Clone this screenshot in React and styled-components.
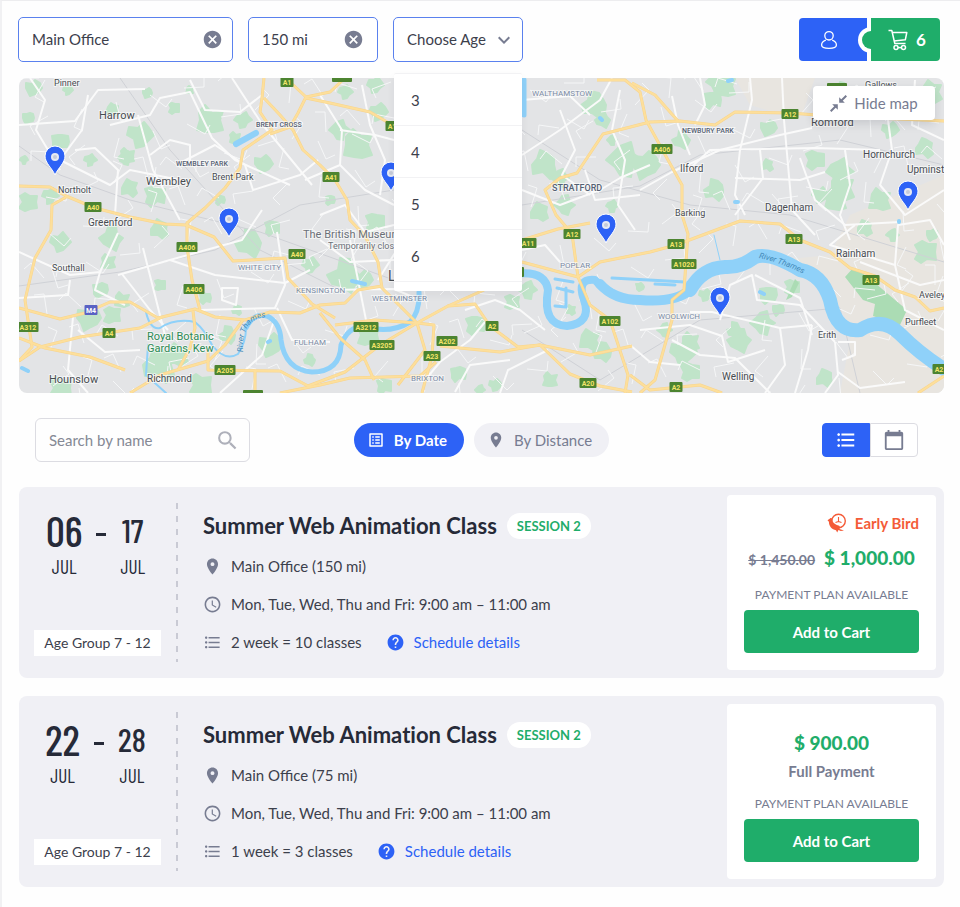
import React, { useState } from "react";
import styled, { createGlobalStyle } from "styled-components";
import {
  MdCalendarToday,
  MdCancel,
  MdFormatListBulleted,
  MdHelp,
  MdKeyboardArrowDown,
  MdLocationOn,
  MdOutlineListAlt,
  MdSchedule,
  MdSearch,
} from "react-icons/md";

const colors = {
  blue: "#2d62f6",
  green: "#1fad6a",
  orange: "#f45b38",
  dark: "#262a38",
  text: "#3c404c",
  grey: "#777c91",
  panel: "#f0f0f5",
  line: "#dcdce2",
};

const classes = [
  {
    id: 1,
    from: ["06", "JUL"],
    to: ["17", "JUL"],
    ages: "Age Group 7 - 12",
    title: "Summer Web Animation Class",
    session: "SESSION 2",
    place: "Main Office (150 mi)",
    time: "Mon, Tue, Wed, Thu and Fri: 9:00 am – 11:00 am",
    length: "2 week = 10 classes",
    oldPrice: "$ 1,450.00",
    price: "$ 1,000.00",
    earlyBird: true,
  },
  {
    id: 2,
    from: ["22", "JUL"],
    to: ["28", "JUL"],
    ages: "Age Group 7 - 12",
    title: "Summer Web Animation Class",
    session: "SESSION 2",
    place: "Main Office (75 mi)",
    time: "Mon, Tue, Wed, Thu and Fri: 9:00 am – 11:00 am",
    length: "1 week = 3 classes",
    price: "$ 900.00",
    earlyBird: false,
  },
];

const ages = ["3", "4", "5", "6"];

/* ---------- map data ---------- */

const parks = [
  [33, 88, 8], [28, 118, 6], [68, 90, 5], [113, 110, 7], [60, 142, 9], [140, 135, 13],
  [127, 156, 8], [147, 93, 5], [174, 108, 6], [210, 120, 15], [243, 120, 8], [235, 138, 6],
  [190, 90, 4], [130, 188, 9], [155, 196, 11], [126, 158, 7], [90, 160, 6], [263, 164, 9],
  [28, 202, 10], [50, 196, 8], [24, 160, 4], [160, 229, 10], [220, 200, 5], [272, 228, 8],
  [60, 242, 10], [112, 238, 12], [108, 262, 8], [250, 243, 14], [100, 290, 8], [88, 318, 12],
  [112, 315, 9], [122, 300, 8], [160, 285, 6], [160, 365, 18], [178, 355, 12], [60, 388, 12],
  [200, 385, 12], [228, 335, 9], [270, 345, 12], [237, 310, 5], [310, 360, 6], [205, 298, 6],
  [358, 145, 16], [340, 130, 10], [378, 112, 9], [375, 222, 10], [345, 92, 7], [375, 85, 8],
  [330, 200, 5], [345, 275, 17], [362, 280, 10], [310, 265, 8], [368, 335, 12], [384, 386, 8],
  [595, 105, 14], [603, 120, 8], [612, 140, 5], [545, 165, 14], [560, 178, 9], [565, 205, 10],
  [540, 212, 10], [625, 160, 17], [645, 165, 14], [612, 206, 6], [528, 290, 9], [512, 302, 8],
  [475, 325, 10], [458, 374, 8], [550, 380, 8], [590, 340, 11], [603, 352, 10], [571, 310, 5],
  [495, 385, 6], [480, 390, 5], [725, 86, 12], [712, 100, 9], [718, 82, 11], [682, 140, 9],
  [715, 190, 11], [768, 128, 8], [768, 165, 6], [815, 160, 10], [840, 172, 13], [842, 188, 14],
  [836, 200, 12], [820, 195, 8], [890, 130, 8], [925, 148, 10], [880, 200, 12], [865, 228, 8],
  [893, 235, 6], [842, 88, 6], [932, 92, 12], [690, 342, 10], [683, 352, 13], [665, 330, 7],
  [740, 340, 12], [763, 323, 12], [735, 330, 8], [690, 372, 10], [768, 295, 9], [792, 287, 8],
  [778, 310, 6], [825, 378, 9], [925, 252, 12], [932, 235, 6], [705, 295, 6], [640, 287, 4],
];

const mainRoads = [
  "M19 186 L50 187 L66 196 L95 208 L130 217 L165 224 L186 225 L214 237 L233 261 L285 258 L288 278 L312 304 L335 318",
  "M264 78 L262 98 L260 112 L272 130 L243 150 L240 168 L225 188 L205 208 L187 223 L187 247 L192 280 L200 310",
  "M264 98 L280 115 L293 130 L303 150 L320 165 L335 180 L347 200 L350 220 L365 236 L378 262 L382 288 L417 323",
  "M290 82 L306 97 L330 92 L345 78",
  "M306 97 L298 113 L290 127 L270 134",
  "M306 98 L330 103 L370 112 L394 126",
  "M68 196 L52 205 L51 230 L35 258 L25 300 L32 347 L19 361",
  "M19 308 L60 319 L85 313 L110 302 L130 302 L158 318 L195 309 L215 317 L245 320 L270 312 L300 313 L320 305 L345 303 L358 290 L382 286",
  "M19 361 L40 347 L80 337 L140 328 L162 317",
  "M19 338 L45 348 L90 357 L125 370",
  "M130 393 L160 375 L208 361 L225 345 L243 320",
  "M193 311 L195 328 L190 348 L178 370",
  "M208 350 L208 370 L280 371 L308 386 L345 372 L380 345 L417 323",
  "M255 371 L255 393",
  "M320 313 L340 338 L365 360 L374 380",
  "M335 325 L375 320 L417 323",
  "M280 393 L320 385 L350 378 L420 376 L436 362",
  "M417 323 L425 350 L398 385",
  "M417 323 L434 325 L432 356 L422 393",
  "M417 323 L448 306 L475 304 L490 326 L518 347 L540 345 L570 374 L600 386 L632 392",
  "M448 306 L484 290",
  "M440 346 L500 352 L540 345 L590 355 L632 346",
  "M522 262 L578 277 L600 262 L650 252 L676 245 L740 221 L780 224 L800 240 L830 252 L850 268 L875 276 L895 290 L915 297 L930 311 L944 308",
  "M578 277 L590 305 L610 320 L628 375 L625 393",
  "M522 240 L558 229 L590 223",
  "M578 277 L572 234 L556 215 L545 190 L560 178 L577 173 L603 134 L650 122 L680 121 L715 125 L735 112 L790 113 L830 116 L944 121",
  "M597 80 L625 80 L640 92 L646 120 L668 160 L682 185 L682 215 L688 234 L684 290 L672 300 L672 320 L655 380 L640 393",
  "M632 83 L655 95 L678 121",
  "M630 375 L650 390 L700 385 L722 393",
  "M918 393 L944 376",
];

const smallRoads = [
  "M19 125 L75 121 L98 90 L145 89",
  "M30 78 L45 100 L36 130 L60 170",
  "M88 95 L82 130 L60 160 L110 185 L130 170 L180 180",
  "M110 125 L150 115 L160 98 L190 92 L212 138 L235 160 L290 185",
  "M138 115 L153 170 L180 220",
  "M190 80 L205 110 L240 112 L262 95",
  "M232 78 L262 124 L312 185",
  "M75 150 L95 148 L118 170 L115 215",
  "M190 165 L190 145 L170 140 L150 155",
  "M180 163 L215 145 L245 165 L253 190 L300 175 L318 160",
  "M19 252 L70 275 L100 272 L118 233",
  "M70 280 L68 295 L19 298",
  "M100 272 L95 290 L125 305",
  "M122 274 L150 310 L168 330",
  "M118 275 L170 260 L242 240 L262 210",
  "M143 248 L165 335",
  "M170 260 L215 275 L285 283 L310 270",
  "M73 317 L68 370 L88 393",
  "M78 330 L105 352 L140 350",
  "M200 310 L275 308 L285 285 L277 232",
  "M277 308 L292 340 L330 342",
  "M222 288 L238 288 L236 305 L222 300 Z",
  "M275 318 L262 355 L220 393",
  "M305 180 L340 165 L342 130 L320 95",
  "M362 85 L370 125 L385 160 L380 195",
  "M340 130 L375 135 L394 140",
  "M340 165 L365 190 L394 205",
  "M320 215 L345 205 L365 232 L394 225",
  "M320 240 L350 262 L394 260",
  "M325 290 L394 289 L420 300",
  "M350 240 L368 330",
  "M400 245 L378 280",
  "M425 380 L440 362 L470 340 L485 322",
  "M455 392 L470 365 L510 360",
  "M465 310 L495 300 L520 310 L545 330",
  "M500 393 L508 370 L548 350",
  "M522 250 L545 245 L560 262",
  "M522 155 L560 130 L600 100 L612 78",
  "M522 100 L570 96 L590 115",
  "M560 110 L575 150 L562 175 L590 195",
  "M522 190 L560 205 L600 190 L620 178 L650 165",
  "M612 130 L620 90",
  "M612 130 L625 160 L618 205 L635 230",
  "M585 170 L595 200 L640 195",
  "M640 190 L672 172 L720 150 L780 135 L812 128",
  "M688 170 L710 150 L815 148 L880 150",
  "M672 96 L678 125 L690 155",
  "M700 78 L705 105 L695 125",
  "M750 78 L752 100 L740 150 L735 195 L745 215",
  "M782 78 L784 120 L792 210 L815 235",
  "M735 178 L800 180 L825 172",
  "M760 150 L763 178 L735 215",
  "M800 158 L815 200 L845 225 L900 222",
  "M845 150 L850 185 L840 215 L850 240",
  "M888 120 L892 150 L880 185 L905 215 L944 190",
  "M915 80 L912 125 L944 140",
  "M855 225 L830 245 L895 265 L905 310 L944 330",
  "M895 265 L898 225 L930 220 L944 245",
  "M860 262 L920 285 L944 280",
  "M720 320 L730 285 L752 275 L757 300 L800 305 L835 342",
  "M690 312 L712 312 L780 328 L812 325",
  "M755 275 L800 298 L812 335",
  "M640 330 L690 325 L722 336 L728 362 L765 350",
  "M812 325 L808 350 L795 393",
  "M780 328 L785 365 L765 393",
  "M835 342 L838 375 L825 393",
  "M838 342 L855 342 L855 355 L842 360",
  "M838 372 L860 388 L905 382",
  "M672 340 L700 355 L735 358 L770 393",
  "M630 345 L650 362 L680 365",
];

const shields = [
  ["A1", 287, 82], ["A40", 93, 207], ["A406", 187, 247], ["A406", 194, 289],
  ["A40", 297, 254], ["A41", 331, 177], ["A1", 392, 126], ["A11", 528, 243], ["A12", 572, 234],
  ["A102", 610, 321], ["A2", 492, 326], ["A3212", 366, 327], ["A3205", 382, 345],
  ["A202", 447, 341], ["A23", 432, 356], ["A20", 588, 383], ["A205", 225, 370], ["A4", 109, 333],
  ["M4", 91, 310], ["A312", 28, 327], ["A13", 676, 244], ["A1020", 684, 264], ["A13", 794, 239],
  ["A13", 871, 280], ["A12", 790, 114], ["A406", 662, 149], ["A2", 676, 387], ["A2", 939, 369],
];

const blankShields = [[342, 77], [253, 395], [837, 88], [514, 272]];

const towns = [
  ["Pinner", 54, 86, 9], ["Harrow", 99, 119, 11], ["Northolt", 58, 193, 9],
  ["Wembley", 146, 185, 11], ["Brent Park", 212, 180, 9], ["Greenford", 88, 226, 10],
  ["Southall", 52, 271, 9], ["Hounslow", 49, 383, 11], ["Richmond", 147, 382, 10],
  ["London", 388, 281, 14], ["Ilford", 680, 172, 10], ["Barking", 675, 216, 9],
  ["Dagenham", 765, 211, 10], ["Romford", 811, 126, 11], ["Gallows", 865, 88, 9],
  ["Hornchurch", 863, 158, 10], ["Upminst", 907, 173, 10], ["Rainham", 836, 257, 10],
  ["Aveley", 919, 298, 9], ["Purfleet", 905, 325, 9], ["Erith", 818, 338, 9],
  ["Welling", 722, 380, 10],
];

const districts = [
  ["BRENT CROSS", 256, 127, 7], ["WEMBLEY PARK", 176, 166, 7], ["NEWBURY PARK", 682, 133, 7],
  ["STRATFORD", 552, 191, 9],
];

const quarters = [
  ["WHITE CITY", 238, 270, 8], ["KENSINGTON", 296, 293, 8], ["FULHAM", 294, 345, 8],
  ["WESTMINSTER", 372, 301, 8], ["BRIXTON", 411, 381, 8], ["WALTHAMSTOW", 532, 96, 8],
  ["POPLAR", 560, 268, 8], ["WOOLWICH", 658, 319, 8],
];

const pins = [[55, 174], [229, 236], [391, 190], [606, 242], [720, 315], [908, 209]];

// uneven outline, so that no two parks look alike
const parkShape = ([x, y, r]) =>
  Array.from({ length: 10 }, (_, i) => {
    const reach = r * (0.5 + 0.6 * Math.abs(Math.sin(x * 3 + y * 7 + i * 2)));
    const angle = (i * Math.PI) / 5;
    return `${Math.round(x + reach * Math.cos(angle))},${Math.round(y + reach * Math.sin(angle))}`;
  }).join(" ");

// short back streets, spread over the whole city
const streets = Array.from({ length: 260 }, (_, i) => {
  const x = 19 + ((i * 137) % 925);
  const y = 78 + ((i * 89) % 315);
  const turn = i * 1.7;
  const dx = Math.round(20 * Math.cos(turn));
  const dy = Math.round(20 * Math.sin(turn));
  return `M${x} ${y} l${dx} ${dy} l${Math.round(dy / 2)} ${-Math.round(dx / 2)}`;
}).join(" ");

function CityMap() {
  return (
    <MapDrawing viewBox="19 78 925 315" role="img" aria-label="Map of London">
      <rect x="19" y="78" width="925" height="315" fill="#e3e4e6" />
      <path d="M735 78 H815 L800 120 L750 105 Z M850 215 L944 175 V393 H840 L852 330 L830 290 L780 260 L830 255 Z" fill="#e8e5e0" />
      <g fill="#c0e4c9" stroke="#c0e4c9" strokeWidth="2" strokeLinejoin="round">
        {parks.map((park) => (
          <polygon key={park.join()} points={parkShape(park)} />
        ))}
      </g>
      <path d="M845 277 L853 268 L862 273 L875 283 L907 310 L900 325 L873 316 L875 304 L863 300 Z" fill="#abdcb4" />
      <path d="M786 300 L795 279 L799 283 L792 297 Z" fill="#abdcb4" />
      <g fill="none" stroke="#cfd1d6" strokeWidth="1">
        <path d="M19 146 L60 175 L130 200 L260 232 L394 280" />
        <path d="M19 286 L120 272 L215 250 L300 205 L394 190" />
        <path d="M120 78 L170 150 L260 250 L340 290" />
        <path d="M522 205 L640 186 L700 155 L840 140 L944 165" />
        <path d="M522 130 L600 180 L690 205 L790 215 L944 262" />
        <path d="M522 330 L600 380 L700 320 L840 308 L860 393" />
      </g>
      <path d={streets} fill="none" stroke="#f5f6f7" strokeWidth="1" />
      <g fill="none" stroke="#fafafa" strokeWidth="2" strokeLinejoin="round">
        {smallRoads.map((d) => (
          <path key={d} d={d} />
        ))}
      </g>
      <g fill="none" stroke="#8fd1f9" strokeLinecap="round" strokeLinejoin="round">
        <path d="M146 312 Q150 330 160 328 Q175 318 195 322 Q205 330 212 345 Q225 362 238 354 Q246 342 246 328 M148 345 L146 375 L166 393" strokeWidth="2" />
        <path d="M246 328 Q254 312 267 316 Q280 322 281 340 Q285 370 312 372 Q340 372 341 345 Q350 322 370 328 Q392 333 410 322 Q420 312 419 292" strokeWidth="5" />
        <path d="M515 274 Q545 270 548 290 Q542 325 567 326 Q592 323 584 300 Q576 278 595 280 Q612 300 640 300" strokeWidth="8" />
        <path d="M600 284 Q614 300 640 300 Q675 303 690 290" strokeWidth="10" />
        <path d="M690 290 Q702 268 725 267 Q740 268 755 257 Q770 252 800 270 Q822 274 830 300 Q836 333 860 330 Q882 316 900 334 Q920 354 944 369" strokeWidth="14" />
        <path d="M236 144 L256 133" strokeWidth="6" />
        <path d="M555 279 L573 282 M557 288 L573 292 M555 306 L566 307 L566 288 M612 278 L685 282 M655 284 L675 285" strokeWidth="3" />
        <path d="M714 235 L720 260" strokeWidth="1" />
        <path d="M524 80 V115" strokeWidth="5" />
        <path d="M728 81 L732 80 M735 202 H738 M899 221 V222 M760 292 L764 294 M600 118 L602 120 M22 368 L28 371 M352 281 L365 284 M270 341 L268 342" strokeWidth="4" />
      </g>
      <g fill="none" strokeLinejoin="round">
        {mainRoads.map((d) => (
          <path key={d} d={d} stroke="#f8d48d" strokeWidth="3" />
        ))}
        {mainRoads.map((d) => (
          <path key={d} d={d} stroke="#fddf9b" strokeWidth="2" />
        ))}
      </g>
      {shields.map(([name, x, y]) => {
        const width = name.length * 4 + 5;
        return (
          <g key={`${name}${x}`}>
            <rect x={x - width / 2} y={y - 5} width={width} height="10" rx="1" fill={name === "M4" ? "#5a62c4" : "#4c8430"} />
            <ShieldText x={x} y={y + 3} $motorway={name === "M4"}>{name}</ShieldText>
          </g>
        );
      })}
      {blankShields.map(([x, y]) => (
        <rect key={x} x={x - 10} y={y - 5} width="20" height="10" rx="1" fill="#4c8430" />
      ))}
      {towns.map(([name, x, y, size]) => (
        <MapText key={name} x={x} y={y} $size={size} $color="#484c52">{name}</MapText>
      ))}
      {districts.map(([name, x, y, size]) => (
        <MapText key={name} x={x} y={y} $size={size} $color="#566173" $weight={500}>{name}</MapText>
      ))}
      {quarters.map(([name, x, y, size]) => (
        <MapText key={name} x={x} y={y} $size={size} $color="#7b8ba5">{name}</MapText>
      ))}
      <MapText x="303" y="238" $size={11} $color="#6b7078">The British Museum</MapText>
      <MapText x="328" y="249" $size={9} $color="#6b7078">Temporarily closed</MapText>
      <MapText x="147" y="340" $size={11} $color="#2f8a55">Royal Botanic</MapText>
      <MapText x="147" y="352" $size={11} $color="#2f8a55">Gardens, Kew</MapText>
      <path id="river-east" d="M759 258 Q780 262 812 278" fill="none" />
      <path id="river-west" d="M243 352 Q241 318 268 317" fill="none" />
      <RiverText>
        <textPath href="#river-east">River Thames</textPath>
      </RiverText>
      <RiverText>
        <textPath href="#river-west">River Thames</textPath>
      </RiverText>
      {pins.map(([x, y]) => (
        <g key={x} transform={`translate(${x} ${y})`}>
          <path d="M0 1 C-3 -6 -10 -11 -10 -18 A10 10 0 0 1 10 -18 C10 -11 3 -6 0 1 Z" fill={colors.blue} stroke="#ffffff" strokeWidth="1" />
          <circle cy="-17" r="4" fill="#e6e9f3" />
          <circle cy="-17" r="2" fill="#c6cbd9" />
        </g>
      ))}
    </MapDrawing>
  );
}

/* ---------- icons ---------- */

const UserIcon = () => (
  <svg width="18" height="20" viewBox="0 0 18 20" fill="none" stroke="currentColor" strokeWidth="1.3" aria-hidden="true">
    <circle cx="9" cy="5.8" r="4.2" />
    <path d="M5.8 10.2 C3 11.2 1.6 13 1.6 15 C1.6 17.5 4 18.4 9 18.4 C14 18.4 16.4 17.5 16.4 15 C16.4 13 15 11.2 12.2 10.2" />
  </svg>
);

const CartIcon = () => (
  <svg width="20" height="22" viewBox="0 0 20 22" fill="none" stroke="currentColor" strokeWidth="1.5" strokeLinejoin="round" aria-hidden="true">
    <path d="M0.5 1.5 H3.8 L6.8 14.5 H17.5" />
    <path d="M4.3 3.5 H18.8 L17.3 10.8 L6 12" />
    <circle cx="8" cy="18.6" r="2" />
    <circle cx="15.5" cy="18.6" r="2" />
    <path d="M10 18.6 H13.5" />
  </svg>
);

const ShrinkIcon = () => (
  <svg width="17" height="17" viewBox="0 0 17 17" fill="none" stroke="currentColor" strokeWidth="2" aria-hidden="true">
    <path d="M16.3 0.7 L11 6 M0.7 16.3 L6 11" />
    <path d="M9.2 2.2 V7.8 H14.8 Z M7.8 14.8 V9.2 H2.2 Z" fill="currentColor" stroke="none" />
  </svg>
);

const BirdIcon = () => (
  <svg width="20" height="20" viewBox="0 0 20 20" aria-hidden="true">
    <circle cx="11.5" cy="8" r="6.8" fill="none" stroke="currentColor" strokeWidth="1.4" />
    <path d="M11.5 4 V8.5 M11.5 8.5 L8.5 9.6 M11.5 8.5 L14.5 9.6" fill="none" stroke="currentColor" strokeWidth="1.1" />
    <path d="M0.5 7.2 L3 5.4 C4.3 4.6 5.6 5.6 5.4 7 C5.3 9.4 8 11.6 12.2 12.8 C13.2 13.6 13.2 15 12.4 16 L17 17.4 L13.8 18 L11.4 17 L10.2 19.6 L9 17.2 C5 16.6 2 13.6 1.9 8.8 Z" fill="currentColor" />
  </svg>
);

/* ---------- page ---------- */

function ClassCard({ item }) {
  return (
    <Card>
      <DateColumn>
        <Dates>
          <DateBlock>
            <Day $big>{item.from[0]}</Day>
            <Month>{item.from[1]}</Month>
          </DateBlock>
          <Dash />
          <DateBlock>
            <Day>{item.to[0]}</Day>
            <Month>{item.to[1]}</Month>
          </DateBlock>
        </Dates>
        <AgeTag>{item.ages}</AgeTag>
      </DateColumn>
      <Divider />
      <Details>
        <TitleRow>
          <Title>{item.title}</Title>
          <Session>{item.session}</Session>
        </TitleRow>
        <InfoRow>
          <MdLocationOn />
          {item.place}
        </InfoRow>
        <InfoRow>
          <MdSchedule />
          {item.time}
        </InfoRow>
        <InfoRow>
          <MdFormatListBulleted />
          {item.length}
          <DetailsLink href="#schedule">
            <MdHelp />
            Schedule details
          </DetailsLink>
        </InfoRow>
      </Details>
      <PricePanel>
        {item.earlyBird && (
          <EarlyBird>
            <BirdIcon />
            Early Bird
          </EarlyBird>
        )}
        <Prices>
          {item.oldPrice && <OldPrice>{item.oldPrice}</OldPrice>}
          <Price>{item.price}</Price>
        </Prices>
        {!item.earlyBird && <FullPayment>Full Payment</FullPayment>}
        <Plan>PAYMENT PLAN AVAILABLE</Plan>
        <AddButton type="button">Add to Cart</AddButton>
      </PricePanel>
    </Card>
  );
}

function App() {
  const [office, setOffice] = useState("Main Office");
  const [distance, setDistance] = useState("150 mi");
  const [age, setAge] = useState("");
  const [name, setName] = useState("");

  return (
    <Page>
      <GlobalStyle />
      <TopBar>
        <Field $width="215px">
          <FieldInput aria-label="Office" value={office} onChange={(e) => setOffice(e.target.value)} />
          <ClearButton type="button" aria-label="Clear office" onClick={() => setOffice("")}>
            <MdCancel />
          </ClearButton>
        </Field>
        <Field $width="130px" $end="13px">
          <FieldInput aria-label="Distance" value={distance} onChange={(e) => setDistance(e.target.value)} />
          <ClearButton type="button" aria-label="Clear distance" onClick={() => setDistance("")}>
            <MdCancel />
          </ClearButton>
        </Field>
        <Field $width="130px" $end="6px">
          <AgeSelect aria-label="Age" value={age} onChange={(e) => setAge(e.target.value)}>
            <option value="">Choose Age</option>
            {ages.map((a) => (
              <option key={a}>{a}</option>
            ))}
          </AgeSelect>
          <Chevron />
          <AgeMenu>
            {ages.map((a) => (
              <li key={a}>
                <AgeItem type="button" onClick={() => setAge(a)}>{a}</AgeItem>
              </li>
            ))}
          </AgeMenu>
        </Field>
        <Account>
          <UserButton type="button" aria-label="Account">
            <UserIcon />
          </UserButton>
          <CartSlot>
            <CartButton type="button" aria-label="Cart, 6 items">
              <CartIcon />
              6
            </CartButton>
          </CartSlot>
        </Account>
      </TopBar>

      <MapBox>
        <CityMap />
        <HideMap type="button">
          <ShrinkIcon />
          Hide map
        </HideMap>
      </MapBox>

      <Filters>
        <SearchBox>
          <SearchInput
            aria-label="Search by name"
            placeholder="Search by name"
            value={name}
            onChange={(e) => setName(e.target.value)}
          />
          <MdSearch />
        </SearchBox>
        <SortGroup>
          <SortButton type="button" $active>
            <MdOutlineListAlt />
            By Date
          </SortButton>
          <SortButton type="button">
            <MdLocationOn />
            By Distance
          </SortButton>
        </SortGroup>
        <ViewGroup>
          <ViewButton type="button" aria-label="List view" $active>
            <MdFormatListBulleted />
          </ViewButton>
          <ViewButton type="button" aria-label="Calendar view">
            <MdCalendarToday />
          </ViewButton>
        </ViewGroup>
      </Filters>

      <CardList>
        {classes.map((item) => (
          <ClassCard key={item.id} item={item} />
        ))}
      </CardList>
    </Page>
  );
}

export default App;

const GlobalStyle = createGlobalStyle`
  * {
    box-sizing: border-box;
  }

  body {
    margin: 0;
    background: #fefefe;
    color: ${colors.text};
    font-family: Lato, sans-serif;
    font-size: 15px;
  }

  button,
  input,
  select {
    font: inherit;
    color: inherit;
  }

  button {
    padding: 0;
    border: none;
    background: none;
    cursor: pointer;
  }

  svg {
    flex-shrink: 0;
  }
`;

const Page = styled.main`
  padding: 16px 16px 20px 17px;
  border-top: 1px solid #ededef;
  border-left: 2px solid #f1f1f3;
`;

const TopBar = styled.header`
  display: flex;
  align-items: center;
  gap: 15px;
  padding-right: 4px;
  margin: 0 0 16px -1px;
`;

const Field = styled.div`
  position: relative;
  display: flex;
  align-items: center;
  width: ${(props) => props.$width};
  height: 45px;
  padding: 0 ${(props) => props.$end || "9px"} 0 13px;
  border: 1px solid #5a81ee;
  border-radius: 5px;
  background: #ffffff;
`;

const FieldInput = styled.input`
  flex: 1;
  min-width: 0;
  padding: 0 0 2px;
  border: none;
  outline: none;
  background: none;
`;

const ClearButton = styled.button`
  display: flex;
  color: ${colors.grey};
  font-size: 21px;
`;

const AgeSelect = styled.select`
  appearance: none;
  flex: 1;
  min-width: 0;
  height: 100%;
  padding: 0 0 2px;
  border: none;
  outline: none;
  background: none;
`;

const Chevron = styled(MdKeyboardArrowDown)`
  color: ${colors.grey};
  font-size: 24px;
  pointer-events: none;
`;

const AgeMenu = styled.ul`
  position: absolute;
  z-index: 5;
  top: calc(100% + 12px);
  left: 0;
  right: 0;
  margin: 0;
  padding: 0 0 9px;
  list-style: none;
  border-top: 1px solid #f2f2f4;
  border-radius: 2px;
  background: #ffffff;
  box-shadow: 0 4px 8px rgba(38, 42, 56, 0.06);
`;

const AgeItem = styled.button`
  display: block;
  width: 100%;
  height: 52px;
  padding-left: 17px;
  border-bottom: 1px solid #f2f2f4;
  text-align: left;
`;

const Account = styled.div`
  display: flex;
  gap: 4px;
  margin-left: auto;
`;

const UserButton = styled.button`
  display: flex;
  align-items: center;
  justify-content: center;
  width: 68px;
  height: 43px;
  padding-right: 9px;
  border-radius: 4px 0 0 4px;
  background: ${colors.blue};
  color: #ffffff;
`;

const CartSlot = styled.div`
  position: relative;

  &::before {
    content: "";
    position: absolute;
    top: 13px;
    left: -9px;
    width: 18px;
    height: 18px;
    border-radius: 50%;
    background: ${colors.green};
    box-shadow: 0 0 0 4px #ffffff;
  }
`;

const CartButton = styled.button`
  position: relative;
  display: flex;
  align-items: center;
  justify-content: center;
  gap: 8px;
  width: 69px;
  height: 43px;
  padding-left: 3px;
  border-radius: 0 4px 4px 0;
  background: ${colors.green};
  color: #ffffff;
  font-size: 17px;
  font-weight: 700;
`;

const MapBox = styled.section`
  position: relative;
  overflow: hidden;
  border-radius: 8px;
`;

const MapDrawing = styled.svg`
  display: block;
  width: 100%;
`;

const MapText = styled.text`
  fill: ${(props) => props.$color};
  stroke: rgba(255, 255, 255, 0.6);
  stroke-width: 2px;
  paint-order: stroke;
  font-family: Roboto, sans-serif;
  font-size: ${(props) => props.$size}px;
  font-weight: ${(props) => props.$weight || 400};
`;

const ShieldText = styled.text`
  fill: ${(props) => (props.$motorway ? "#ffffff" : "#f3e36a")};
  text-anchor: middle;
  font-family: Roboto, sans-serif;
  font-size: 7px;
  font-weight: 700;
`;

const RiverText = styled.text`
  fill: #4489b8;
  font-family: Roboto, sans-serif;
  font-size: 8px;
  font-style: italic;
`;

const HideMap = styled.button`
  position: absolute;
  top: 8px;
  right: 9px;
  display: flex;
  align-items: center;
  justify-content: center;
  gap: 7px;
  width: 122px;
  height: 34px;
  border-radius: 4px;
  background: #ffffff;
  box-shadow: 0 4px 10px rgba(38, 42, 56, 0.14);
  color: ${colors.grey};
`;

const Filters = styled.section`
  display: grid;
  grid-template-columns: 1fr auto 1fr;
  align-items: center;
  padding: 25px 16px;
`;

const SearchBox = styled.div`
  display: flex;
  align-items: center;
  width: 215px;
  height: 44px;
  padding: 0 9px 0 13px;
  border: 1px solid ${colors.line};
  border-radius: 6px;

  svg {
    color: #aeb0ba;
    font-size: 25px;
  }
`;

const SearchInput = styled(FieldInput)`
  padding: 0;

  &::placeholder {
    color: #858995;
  }
`;

const SortGroup = styled.div`
  display: flex;
  gap: 10px;
`;

const SortButton = styled.button`
  display: flex;
  align-items: center;
  gap: 9px;
  height: 34px;
  padding: 0 17px 0 13px;
  border-radius: 17px;
  background: ${(props) => (props.$active ? colors.blue : colors.panel)};
  color: ${(props) => (props.$active ? "#ffffff" : colors.grey)};
  font-weight: ${(props) => (props.$active ? 700 : 400)};

  svg {
    font-size: 18px;
  }
`;

const ViewGroup = styled.div`
  display: flex;
  justify-self: end;
  margin-right: 10px;
`;

const ViewButton = styled.button`
  display: flex;
  align-items: center;
  justify-content: center;
  width: 48px;
  height: 34px;
  border: 1px solid ${(props) => (props.$active ? colors.blue : colors.line)};
  border-radius: ${(props) => (props.$active ? "4px 0 0 4px" : "0 4px 4px 0")};
  background: ${(props) => (props.$active ? colors.blue : "#ffffff")};
  color: ${(props) => (props.$active ? "#ffffff" : colors.grey)};
  font-size: 22px;
`;

const CardList = styled.section`
  display: grid;
  gap: 18px;
`;

const Card = styled.article`
  display: flex;
  padding: 8px;
  border-radius: 8px;
  background: ${colors.panel};
`;

const DateColumn = styled.div`
  display: flex;
  flex-direction: column;
  justify-content: space-between;
  align-items: center;
  width: 141px;
  padding: 14px 0;
`;

const Dates = styled.div`
  display: flex;
  align-items: flex-end;
  gap: 14px;
  padding-right: 4px;
`;

const DateBlock = styled.div`
  display: flex;
  flex-direction: column;
  align-items: center;
  color: ${colors.dark};
  font-family: "Barlow Condensed", "Roboto Condensed", "Liberation Sans Narrow", "Liberation Sans", sans-serif;
`;

const Day = styled.span`
  font-size: ${(props) => (props.$big ? "42px" : "33px")};
  font-weight: 500;
  line-height: 42px;
`;

const Month = styled.span`
  font-size: 19px;
  line-height: 32px;
`;

const Dash = styled.span`
  width: 10px;
  height: 3px;
  margin-bottom: 47px;
  background: ${colors.dark};
`;

const AgeTag = styled.span`
  padding: 4px 10px;
  background: #ffffff;
  font-size: 14px;
  line-height: 18px;
`;

const Divider = styled.div`
  width: 2px;
  margin: 8px 0 8px 8px;
  background: repeating-linear-gradient(#c9cad4 0 6px, transparent 6px 13px);
`;

const Details = styled.div`
  flex: 1;
  padding: 17px 0 0 25px;
`;

const TitleRow = styled.div`
  display: flex;
  align-items: center;
  gap: 10px;
  margin-bottom: 7px;
`;

const Title = styled.h2`
  margin: 0;
  color: ${colors.dark};
  font-size: 22px;
  font-variant-ligatures: none;
  font-weight: 700;
  line-height: 28px;
`;

const Session = styled.span`
  padding: 0 10px;
  border-radius: 13px;
  background: #ffffff;
  color: ${colors.green};
  font-size: 13px;
  font-weight: 700;
  line-height: 26px;
`;

const InfoRow = styled.div`
  display: flex;
  align-items: center;
  gap: 9px;
  height: 38px;

  svg {
    color: ${colors.grey};
    font-size: 19px;
  }
`;

const DetailsLink = styled.a`
  display: flex;
  align-items: center;
  gap: 9px;
  margin-left: 15px;
  color: ${colors.blue};
  text-decoration: none;

  svg {
    color: ${colors.blue};
  }
`;

const PricePanel = styled.div`
  display: flex;
  flex-direction: column;
  justify-content: flex-end;
  width: 209px;
  min-height: 175px;
  padding: 0 17px 17px;
  border-radius: 4px;
  background: #ffffff;
`;

const EarlyBird = styled.div`
  display: flex;
  align-items: center;
  justify-content: flex-end;
  gap: 8px;
  margin-bottom: 11px;
  color: ${colors.orange};
  font-weight: 700;
`;

const Prices = styled.div`
  display: flex;
  align-items: baseline;
  justify-content: center;
  gap: 9px;
  white-space: nowrap;
`;

const OldPrice = styled.s`
  color: ${colors.grey};
  font-size: 14px;
  font-weight: 700;
`;

const Price = styled.strong`
  color: ${colors.green};
  font-size: 19px;
  font-weight: 900;
  line-height: 28px;
`;

const FullPayment = styled.span`
  margin-top: 4px;
  color: ${colors.grey};
  font-weight: 700;
  line-height: 20px;
  text-align: center;
`;

const Plan = styled.span`
  margin: 15px 0 7px;
  color: ${colors.grey};
  font-size: 12px;
  line-height: 16px;
  text-align: center;
`;

const AddButton = styled.button`
  height: 43px;
  border-radius: 4px;
  background: ${colors.green};
  color: #ffffff;
  font-weight: 700;
`;
